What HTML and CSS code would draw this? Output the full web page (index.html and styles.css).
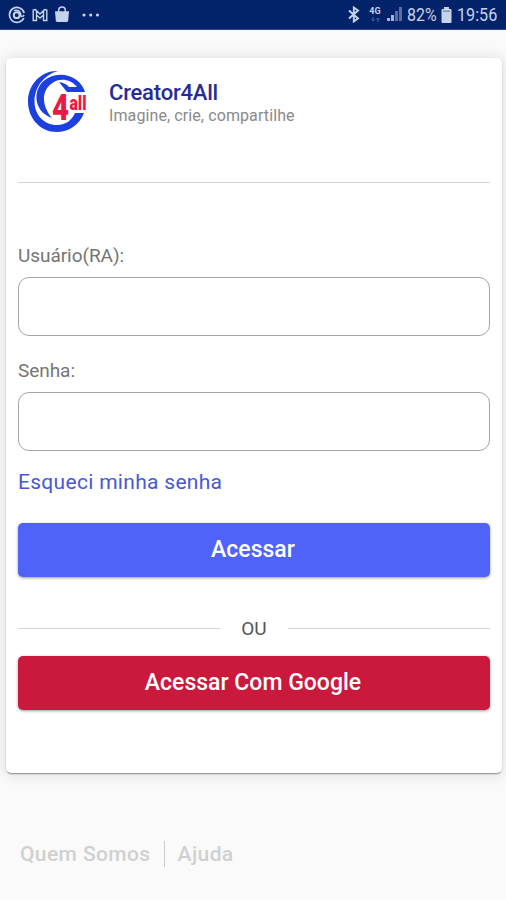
FILE: index.html
```html
<!DOCTYPE html>
<html lang="pt-BR">
<head>
<meta charset="utf-8">
<meta name="viewport" content="width=device-width, initial-scale=1">
<title>Creator4All</title>
<link rel="stylesheet" href="styles.css">
</head>
<body>
<header class="status">
  <div class="status-left">
    <svg width="18" height="18" viewBox="0 0 18 18" fill="none" stroke="currentColor"><path d="M16.200 7A7.500 7.500 0 1 0 15.800 12M13.500 14.600A7.500 7.500 0 0 1 8 16.500" stroke-width="1.700"/><circle cx="8.700" cy="9.200" r="2.900" stroke-width="2"/><path d="M6 4.600Q8.700 3.600 11 5Q13 6.500 12.600 9.500Q14 11.500 16.200 9" stroke-width="1.500"/></svg>
    <svg class="mail" width="16" height="14" viewBox="0 0 16 14" fill="none" stroke="currentColor" stroke-width="1.400"><path d="M1.200 12.500V2l2.200-.4L8 6l4.600-4.400 2.200.4v10.500h-3.300V7L8 10 4.500 7v5.500zM4.500 7V3M11.500 7V3"/></svg>
    <svg class="bag" width="16" height="17" viewBox="0 0 16 17"><path d="M1 5.200h14l-.8 9.300q-.2 1.500-1.700 1.500h-9q-1.500 0-1.700-1.500z" fill="currentColor"/><path d="M4.700 6V4.200a3.300 3.300 0 0 1 6.600 0V6" fill="none" stroke="currentColor" stroke-width="1.500"/></svg>
    <svg class="dots" width="18" height="4" viewBox="0 0 18 4" fill="currentColor"><circle cx="2" cy="2" r="1.600"/><circle cx="8.700" cy="2" r="1.600"/><circle cx="15.500" cy="2" r="1.600"/></svg>
  </div>
  <div class="status-right">
    <svg class="bt" width="12" height="17" viewBox="0 0 12 17" fill="none" stroke="currentColor" stroke-width="1.900"><path d="M1 4.500l9 8-4.200 3V1.500L10 4.500l-9 8"/></svg>
    <div class="network"><span>4G</span><svg width="9" height="5" viewBox="0 0 9 5" fill="none" stroke="currentColor"><path d="M2 0v4M.5 2.500L2 4l1.500-1.500M7 5V1M5.500 2.500L7 1l1.500 1.500"/></svg></div>
    <svg class="signal" width="15" height="15" viewBox="0 0 15 15"><path d="M0 14h3v-3H0zM4 14h3V8H4z" fill="#a8b6d2"/><path d="M8 14h3V4H8zM12 14h3V0h-3z" fill="#586f9f"/></svg>
    <span class="percent">82%</span>
    <svg class="battery" width="11" height="16" viewBox="0 0 11 16"><path d="M1.500 2H3V0h5v2h1.500q1 0 1 1v12q0 1-1 1h-8q-1 0-1-1V3q0-1 1-1z" fill="currentColor"/><path d="M2 4.200h7" stroke="#72809f" stroke-width="1.200"/></svg>
    <span class="time">19:56</span>
  </div>
</header>
<main class="card">
  <div class="brand">
    <svg class="logo" width="64" height="64" viewBox="0 0 64 64">
      <path d="M31 1C16 0 1 13 1 31.500 1 49 14 62 29.500 62c12 0 23-7 27.500-19h-9C45 50 39 55 30 55 17 55 7.500 45 7.500 31.500 7.500 17 17 5 31 1z" fill="#1c3fe0"/>
      <path d="M25 48C5 41 5 16 21 8c15-8 33 0 37 14H40l-8-10c5 1 8 2.500 10 5h8C43 8 31 8 24 14c-10 8-9 22 1 34z" fill="#1c3fe0"/>
      <g class="logo-text"><text x="25" y="49.500" font-size="36" textLength="17" lengthAdjust="spacingAndGlyphs">4</text><text x="42.500" y="40" font-size="20" textLength="17" lengthAdjust="spacingAndGlyphs">all</text></g>
    </svg>
    <div class="brand-text">
      <h1>Creator4All</h1>
      <p>Imagine, crie, compartilhe</p>
    </div>
  </div>
  <form class="login">
    <label for="user">Usuário(RA):</label>
    <input id="user" type="text">
    <label for="pass" class="second">Senha:</label>
    <input id="pass" type="password">
    <a class="forgot" href="#">Esqueci minha senha</a>
    <button class="primary" type="button">Acessar</button>
    <div class="or"><span>OU</span></div>
    <button class="google" type="button">Acessar Com Google</button>
  </form>
</main>
<footer class="links"><a class="about" href="#">Quem Somos</a><a class="help" href="#">Ajuda</a></footer>
</body>
</html>
```
FILE: styles.css
```css
* { box-sizing: border-box; }
body {
  margin: 0;
  height: 900px;
  overflow: hidden;
  background: #fafafa;
  font-family: Roboto, "Liberation Sans", sans-serif;
}
.status {
  height: 30px;
  padding: 0 9px 0 8px;
  display: flex;
  justify-content: space-between;
  align-items: center;
  background: #02226a;
  border-bottom: 1px solid #31477f;
  color: #c6d3ea;
}
.status-left, .status-right { display: flex; align-items: center; }
.mail { margin-left: 6px; }
.bag { margin-left: 6px; }
.dots { margin-left: 12px; }
.network {
  display: flex;
  flex-direction: column;
  align-items: center;
  width: 12px;
  margin-left: 9px;
  font-size: 9px;
  font-weight: 700;
  line-height: 9px;
}
.network svg { opacity: .4; margin-top: 1px; }
.signal { margin-left: 6px; }
.percent, .time { font-size: 19px; line-height: 28px; transform-origin: left; }
.percent { margin-left: 5px; width: 30px; transform: scaleX(.84); }
.battery { margin-left: 4px; }
.time { margin-left: 5px; width: 40px; transform: scaleX(.85); }
.card {
  height: 715px;
  margin: 28px 4px 0 6px;
  padding: 12px;
  background: #fff;
  border-radius: 5px;
  box-shadow: 0 2px 1px -1px rgba(0,0,0,.25), 0 1px 2px rgba(0,0,0,.18), 0 1px 14px 2px rgba(0,0,0,.1);
}
.brand {
  display: flex;
  height: 113px;
  padding-left: 9px;
  border-bottom: 1px solid #d4d4d4;
}
.logo { overflow: visible; }
.logo-text { font-family: Roboto, sans-serif; font-weight: 900; fill: #ed1744; stroke: #fff; stroke-width: 2px; paint-order: stroke; }
.brand-text { margin: 10px 0 0 18px; }
h1, p { margin: 0; white-space: nowrap; }
h1 { font-size: 22px; font-weight: 500; line-height: 26px; letter-spacing: -.2px; color: #282b95; }
p { font-size: 16px; line-height: 19px; letter-spacing: .1px; color: #8a8a8a; }
.login { display: flex; flex-direction: column; align-items: stretch; padding-top: 61px; }
label { font-size: 19px; line-height: 24px; color: #757575; margin-bottom: 9px; letter-spacing: -.05px; }
label.second { margin-top: 23px; }
input {
  width: 100%;
  height: 59px;
  border: 1px solid #a5a5a5;
  border-radius: 11px;
  background: #fff;
  padding: 0 14px;
  font: 19px Roboto, sans-serif;
}
.forgot { margin-top: 17px; font-size: 21px; line-height: 28px; letter-spacing: .3px; color: #4757dc; text-decoration: none; }
button {
  height: 54px;
  border: 0;
  border-radius: 5px;
  padding: 0 8px 1px 6px;
  color: #fff;
  font: 500 23px Roboto, sans-serif;
  box-shadow: 0 1px 3px rgba(0,0,0,.4);
}
.primary { margin-top: 27px; background: #5063f8; }
.google { background: #cb183d; }
.or { display: flex; align-items: center; height: 79px; padding-top: 24px; color: #555; font-size: 19px; }
.or::before, .or::after { content: ""; flex: 1; height: 1px; background: #d5d5d5; }
.or span { margin: 0 21px; }
.links { display: flex; align-items: center; margin: 68px 0 0 20px; height: 26px; font-size: 21px; font-weight: 500; }
.links a { color: #d0d0d0; text-decoration: none; line-height: 26px; letter-spacing: .4px; }
.help { margin-left: 13px; padding-left: 13px; border-left: 1px solid #cdcdcd; }
```
